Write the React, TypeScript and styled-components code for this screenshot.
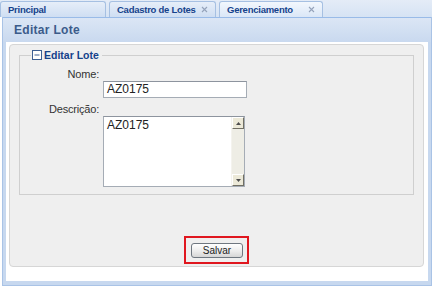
import styled, { createGlobalStyle } from "styled-components"

const Global = createGlobalStyle`
  html, body {
    margin: 0;
    padding: 0;
    background: #ffffff;
  }
  body {
    font-family: "Liberation Sans", Arial, sans-serif;
  }
`

const Screen = styled.div`
  width: 432px;
  height: 288px;
  display: flex;
  flex-direction: column;
  background: #ffffff;
  overflow: hidden;
`

const TabStrip = styled.div`
  height: 17px;
  flex: 0 0 auto;
  display: flex;
  align-items: flex-end;
  gap: 3px;
  background: linear-gradient(#e4ecf7, #d6e3f4);
`

const Tab = styled.div<{ $width: number; $active?: boolean }>`
  width: ${(p) => p.$width}px;
  height: 16px;
  box-sizing: border-box;
  display: flex;
  align-items: center;
  gap: 3px;
  padding: 0 7px 0 7px;
  border: 1px solid #a6c0e2;
  border-bottom: none;
  border-radius: 3px 3px 0 0;
  background: ${(p) =>
    p.$active
      ? "linear-gradient(#f2f7fd, #dbe7f7)"
      : "linear-gradient(#e6eef9, #cfdef2)"};
  font-size: 9.5px;
  font-weight: bold;
  letter-spacing: -0.25px;
  color: #15428b;
`

const TabLabel = styled.span`
  flex: 1;
  white-space: nowrap;
`

const CloseIcon = () => (
  <svg width="7" height="7" viewBox="0 0 7 7" style={{ flexShrink: 0 }}>
    <path d="M1 1L6 6M6 1L1 6" stroke="#95a3bb" strokeWidth="1.1" />
  </svg>
)

const Window = styled.div`
  flex: 1;
  display: flex;
  flex-direction: column;
  margin: 0 0 2px 2px;
  border: 1px solid #a9c3e6;
  border-top: none;
  background: #c7d8ef;
  padding: 0 3px 4px 3px;
`

const Header = styled.div`
  height: 24px;
  flex: 0 0 auto;
  display: flex;
  align-items: center;
  padding-left: 11px;
  margin: 0 -3px;
  border-top: 1px solid #99bbe8;
  background: linear-gradient(#dbe6f5, #c9d9ef);
  font-size: 12px;
  font-weight: bold;
  color: #3b5b8a;
  letter-spacing: 0.3px;
`

const Body = styled.div`
  flex: 1;
  display: flex;
  background: #ffffff;
  padding: 2px 4px 14px 3px;
`

const Card = styled.div`
  flex: 1;
  display: flex;
  flex-direction: column;
  background: #efefef;
  border: 1px solid #d6d6d6;
  border-radius: 4px;
  padding: 4px 9px 2px 9px;
`

const Fieldset = styled.fieldset`
  margin: 0;
  height: 146px;
  box-sizing: border-box;
  border: 1px solid #cfcfcf;
  padding: 5px 0 0 0;
`

const Legend = styled.legend`
  margin-left: 11px;
  padding: 0 3px 0 1px;
  display: flex;
  align-items: center;
  gap: 2px;
  font-size: 10.5px;
  font-weight: bold;
  color: #15428b;
`

const ToggleBox = () => (
  <svg width="10" height="10" viewBox="0 0 10 10">
    <rect x="0.5" y="0.5" width="9" height="9" fill="#ffffff" stroke="#3d5f93" />
    <path d="M2.5 5H7.5" stroke="#3d5f93" />
  </svg>
)

const Form = styled.div`
  display: grid;
  grid-template-columns: 79px auto;
  column-gap: 4px;
  align-items: start;
`

const Label = styled.div<{ $top: number }>`
  grid-column: 1;
  text-align: right;
  font-size: 11px;
  letter-spacing: -0.2px;
  color: #333333;
  margin-top: ${(p) => p.$top}px;
  line-height: 13px;
`

const TextInput = styled.div`
  grid-column: 2;
  width: 144px;
  height: 17px;
  box-sizing: border-box;
  border: 1px solid #a5acb5;
  border-top-color: #8d949e;
  background: #ffffff;
  font-size: 12px;
  color: #222222;
  line-height: 15px;
  padding-left: 3px;
`

const TextArea = styled.div`
  grid-column: 2;
  width: 142px;
  height: 71px;
  box-sizing: border-box;
  border: 1px solid #a5acb5;
  border-top-color: #8d949e;
  background: #ffffff;
  display: flex;
`

const AreaText = styled.div`
  flex: 1;
  font-size: 12px;
  color: #222222;
  padding: 1px 0 0 3px;
  line-height: 14px;
`

const ScrollBar = styled.div`
  width: 12px;
  display: flex;
  flex-direction: column;
  justify-content: space-between;
  background: #eeede5;
  border-left: 1px solid #f4f3ee;
`

const ArrowButton = styled.div`
  height: 12px;
  box-sizing: border-box;
  background: #ece9d8;
  border: 1px solid;
  border-color: #ffffff #716f64 #716f64 #ffffff;
  display: flex;
  align-items: center;
  justify-content: center;
`

const Arrow = ({ down }: { down?: boolean }) => (
  <svg width="5" height="3" viewBox="0 0 5 3">
    <path d={down ? "M0 0H5L2.5 3Z" : "M0 3H5L2.5 0Z"} fill="#4d4d4d" />
  </svg>
)

const Spacer = styled.div`
  flex: 1;
`

const Footer = styled.div`
  display: flex;
  justify-content: center;
`

const Highlight = styled.div`
  border: 2px solid #e0171f;
  padding: 2px 4px 4px 5px;
`

const Button = styled.button`
  width: 52px;
  height: 15px;
  box-sizing: border-box;
  padding: 0;
  border: 1px solid #6f7780;
  border-radius: 3px;
  background: linear-gradient(#ffffff, #ececec 55%, #d6d6d6);
  font-family: "Liberation Sans", Arial, sans-serif;
  font-size: 10px;
  color: #222222;
  line-height: 12px;
  cursor: pointer;
`

export default function App() {
  return (
    <Screen>
      <Global />
      <TabStrip>
        <Tab $width={106}>
          <TabLabel>Principal</TabLabel>
        </Tab>
        <Tab $width={107}>
          <TabLabel>Cadastro de Lotes</TabLabel>
          <CloseIcon />
        </Tab>
        <Tab $width={104} $active>
          <TabLabel>Gerenciamento</TabLabel>
          <CloseIcon />
        </Tab>
      </TabStrip>
      <Window>
        <Header>Editar Lote</Header>
        <Body>
          <Card>
            <Fieldset>
              <Legend>
                <ToggleBox />
                Editar Lote
              </Legend>
              <Form>
                <Label $top={2}>Nome:</Label>
                <span />
                <span />
                <TextInput>AZ0175</TextInput>
                <Label $top={5}>Descrição:</Label>
                <span />
                <span />
                <TextArea>
                  <AreaText>AZ0175</AreaText>
                  <ScrollBar>
                    <ArrowButton>
                      <Arrow />
                    </ArrowButton>
                    <ArrowButton>
                      <Arrow down />
                    </ArrowButton>
                  </ScrollBar>
                </TextArea>
              </Form>
            </Fieldset>
            <Spacer />
            <Footer>
              <Highlight>
                <Button>Salvar</Button>
              </Highlight>
            </Footer>
          </Card>
        </Body>
      </Window>
    </Screen>
  )
}
